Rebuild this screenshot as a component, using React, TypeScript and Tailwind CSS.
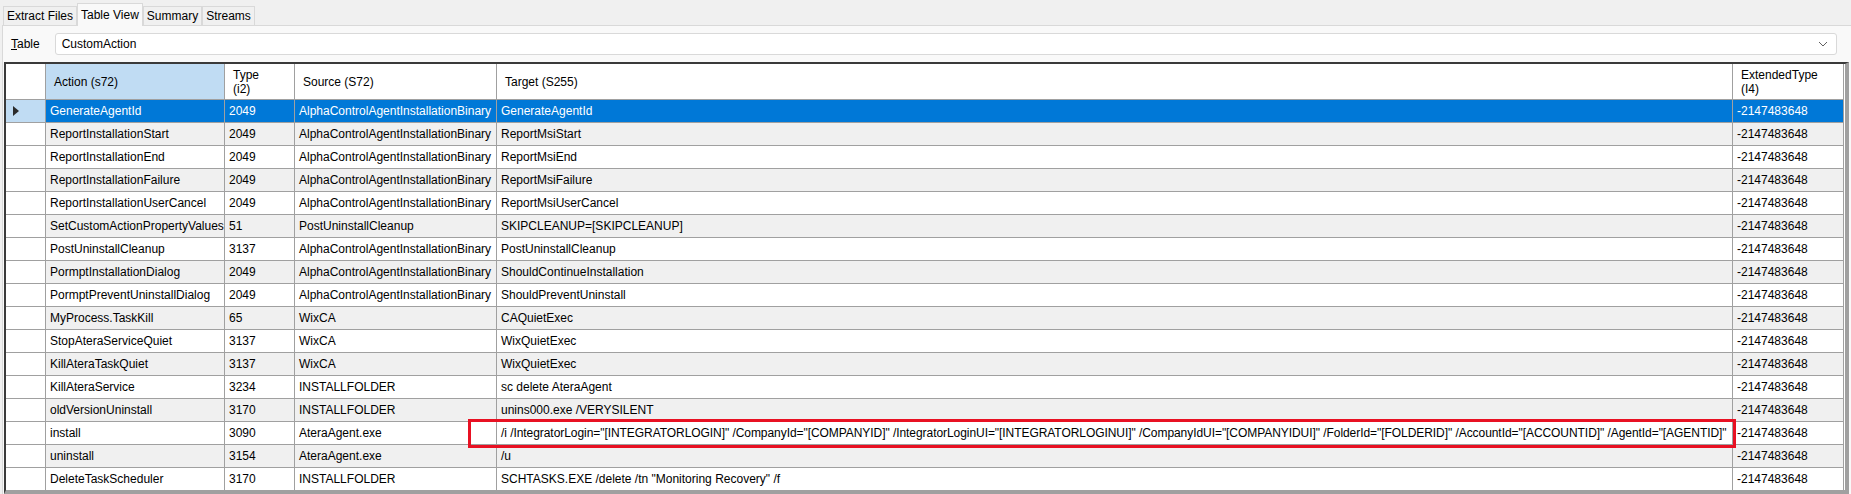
import React from 'react';

type Row = {
  action: string;
  type: string;
  source: string;
  target: string;
  ext: string;
};

const ACB = 'AlphaControlAgentInstallationBinary';
const EXT = '-2147483648';

const rows: Row[] = [
  { action: 'GenerateAgentId', type: '2049', source: ACB, target: 'GenerateAgentId', ext: EXT },
  { action: 'ReportInstallationStart', type: '2049', source: ACB, target: 'ReportMsiStart', ext: EXT },
  { action: 'ReportInstallationEnd', type: '2049', source: ACB, target: 'ReportMsiEnd', ext: EXT },
  { action: 'ReportInstallationFailure', type: '2049', source: ACB, target: 'ReportMsiFailure', ext: EXT },
  { action: 'ReportInstallationUserCancel', type: '2049', source: ACB, target: 'ReportMsiUserCancel', ext: EXT },
  { action: 'SetCustomActionPropertyValues', type: '51', source: 'PostUninstallCleanup', target: 'SKIPCLEANUP=[SKIPCLEANUP]', ext: EXT },
  { action: 'PostUninstallCleanup', type: '3137', source: ACB, target: 'PostUninstallCleanup', ext: EXT },
  { action: 'PormptInstallationDialog', type: '2049', source: ACB, target: 'ShouldContinueInstallation', ext: EXT },
  { action: 'PormptPreventUninstallDialog', type: '2049', source: ACB, target: 'ShouldPreventUninstall', ext: EXT },
  { action: 'MyProcess.TaskKill', type: '65', source: 'WixCA', target: 'CAQuietExec', ext: EXT },
  { action: 'StopAteraServiceQuiet', type: '3137', source: 'WixCA', target: 'WixQuietExec', ext: EXT },
  { action: 'KillAteraTaskQuiet', type: '3137', source: 'WixCA', target: 'WixQuietExec', ext: EXT },
  { action: 'KillAteraService', type: '3234', source: 'INSTALLFOLDER', target: 'sc delete AteraAgent', ext: EXT },
  { action: 'oldVersionUninstall', type: '3170', source: 'INSTALLFOLDER', target: 'unins000.exe /VERYSILENT', ext: EXT },
  {
    action: 'install',
    type: '3090',
    source: 'AteraAgent.exe',
    target:
      '/i /IntegratorLogin="[INTEGRATORLOGIN]" /CompanyId="[COMPANYID]" /IntegratorLoginUI="[INTEGRATORLOGINUI]" /CompanyIdUI="[COMPANYIDUI]" /FolderId="[FOLDERID]" /AccountId="[ACCOUNTID]" /AgentId="[AGENTID]"',
    ext: EXT,
  },
  { action: 'uninstall', type: '3154', source: 'AteraAgent.exe', target: '/u', ext: EXT },
  { action: 'DeleteTaskScheduler', type: '3170', source: 'INSTALLFOLDER', target: 'SCHTASKS.EXE /delete /tn "Monitoring Recovery" /f', ext: EXT },
];

const cols = 'grid grid-cols-[40px_179px_70px_202px_1236px_111px]';

function Tab({ label, active }: { label: string; active?: boolean }) {
  if (active) {
    return (
      <div className="h-[23px] px-[3px] flex items-center bg-[#f9f9f9] border border-b-0 border-[#d9d9d9] -mb-px relative z-10">
        {label}
      </div>
    );
  }
  return (
    <div className="h-[19px] px-[3px] flex items-center bg-[#f0f0f0] border border-b-0 border-[#d9d9d9]">
      {label}
    </div>
  );
}

function HeaderCell({ children, active }: { children?: React.ReactNode; active?: boolean }) {
  return (
    <div
      className={`h-[36px] pl-[8px] flex items-center border-r border-b border-[#a0a0a0] leading-[14px] ${
        active ? 'bg-[#c0dcf3]' : 'bg-white'
      }`}
    >
      <div>{children}</div>
    </div>
  );
}

function DataRow({ row, index }: { row: Row; index: number }) {
  const selected = index === 0;
  const grey = index % 2 === 1;
  const marked = row.action === 'install';
  const cell = `h-[23px] pl-[4px] flex items-center whitespace-nowrap overflow-hidden border-r border-b border-[#a0a0a0] ${
    selected ? 'bg-[#0078d7] text-white' : grey ? 'bg-[#f0f0f0]' : 'bg-white'
  }`;
  return (
    <div className={`${cols} relative`}>
      <div
        className={`h-[23px] flex items-center pl-[7px] border-r border-b border-[#a0a0a0] ${
          selected ? 'bg-[#c0dcf3]' : 'bg-white'
        }`}
      >
        {selected && (
          <svg width="6" height="10" viewBox="0 0 6 10">
            <path d="M0 0 L6 5 L0 10 Z" fill="#2b2b2b" />
          </svg>
        )}
      </div>
      <div className={cell}>{row.action}</div>
      <div className={cell}>{row.type}</div>
      <div className={cell}>{row.source}</div>
      <div className={`${cell} ${marked ? 'tracking-[-0.06px]' : ''}`}>{row.target}</div>
      <div className={cell}>{row.ext}</div>
      {/* highlight box drawn over the install row */}
      {marked && (
        <div className="absolute z-10 left-[462px] top-[-3px] w-[1268px] h-[29px] border-[3px] border-[#e81123] pointer-events-none" />
      )}
    </div>
  );
}

export default function App() {
  return (
    <div
      className="w-[1851px] h-[494px] overflow-hidden bg-[#f0f0f0] text-[12px] text-black"
      style={{ fontFamily: '"Liberation Sans", Arial, sans-serif' }}
    >
      {/* tab strip */}
      <div className="h-[25px] flex items-end pl-[3px]">
        <Tab label="Extract Files" />
        <Tab label="Table View" active />
        <Tab label="Summary" />
        <Tab label="Streams" />
      </div>

      {/* tab page */}
      <div className="h-[469px] bg-[#f9f9f9] border-t border-l border-[#d9d9d9] ml-[2px] flex flex-col">
        <div className="h-[36px] flex items-center pl-[8px] pr-[14px] gap-[15px]">
          <span>
            <span className="underline">T</span>able
          </span>
          <div className="flex-1 h-[22px] bg-white border border-[#d9d9d9] rounded-[3px] flex items-center pl-[6px] pr-[8px] justify-between">
            <span>CustomAction</span>
            <svg width="10" height="6" viewBox="0 0 10 6">
              <path d="M1 1 L5 5 L9 1" fill="none" stroke="#606060" strokeWidth="1" />
            </svg>
          </div>
        </div>

        {/* grid */}
        <div className="ml-[1px] mr-[2px] flex-1 bg-white border-t-2 border-l-2 border-[#3a3a3a] border-r-4 border-b-4 border-r-[#a0a0a0] border-b-[#a0a0a0] overflow-hidden">
          <div className={cols}>
            <HeaderCell />
            <HeaderCell active>Action (s72)</HeaderCell>
            <HeaderCell>
              Type
              <br />
              (i2)
            </HeaderCell>
            <HeaderCell>Source (S72)</HeaderCell>
            <HeaderCell>Target (S255)</HeaderCell>
            <HeaderCell>
              ExtendedType
              <br />
              (I4)
            </HeaderCell>
          </div>
          {rows.map((row, i) => (
            <DataRow key={i} row={row} index={i} />
          ))}
        </div>
      </div>
    </div>
  );
}
